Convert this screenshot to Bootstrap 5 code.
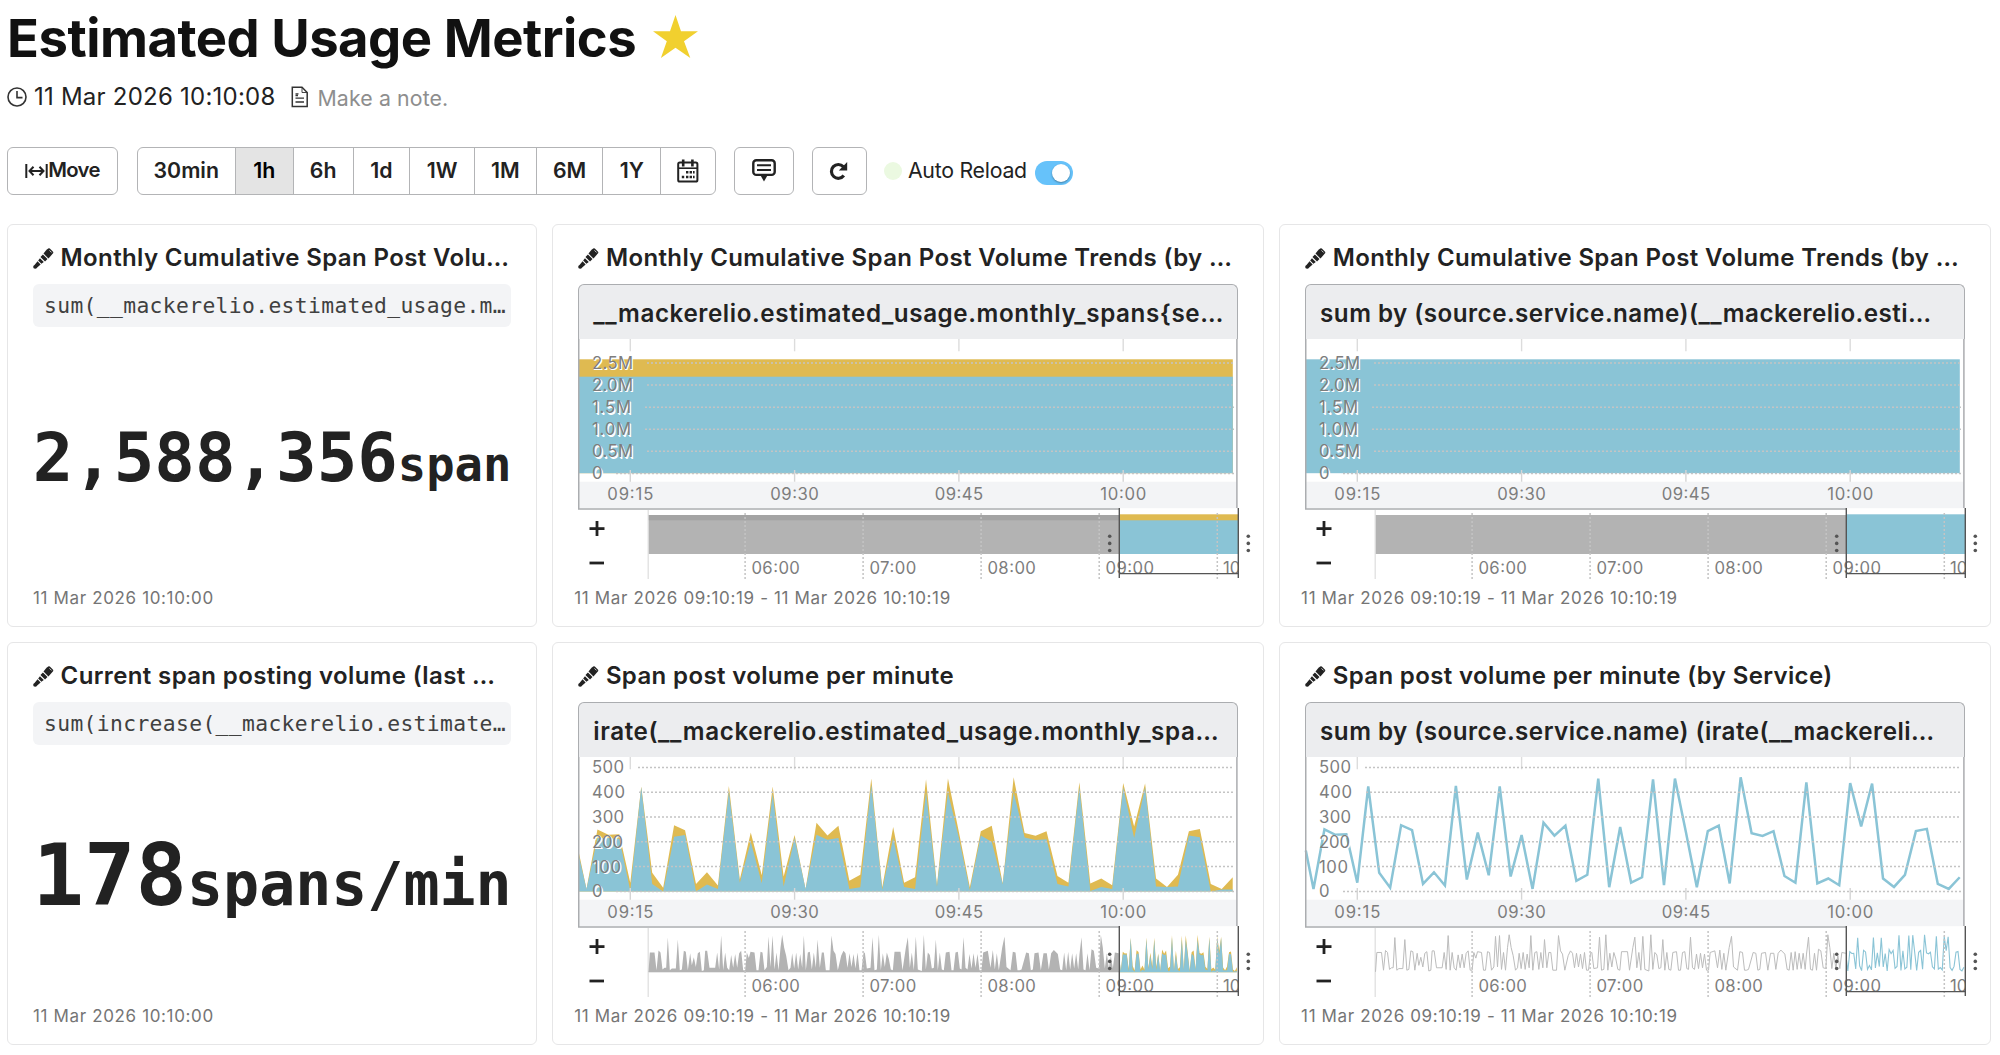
<!DOCTYPE html>
<html lang="en">
<head>
<meta charset="utf-8">
<meta name="viewport" content="width=device-width, initial-scale=1">
<title>Estimated Usage Metrics</title>
<link href="https://cdn.jsdelivr.net/npm/bootstrap@5.3.0/dist/css/bootstrap.min.css" rel="stylesheet">
<style>
body{font-family:Inter,"Liberation Sans",sans-serif;color:#222;background:#fff;overflow:hidden;padding:0 9px 0 7px}
.page-title{font-size:52.6px;font-weight:700;line-height:64px;color:#111;height:75px;padding-top:6px;gap:17px}
.page-title span{letter-spacing:-.5px}
.page-meta{height:44px;gap:0}
.meta-date{font-size:24px;margin-left:7px;letter-spacing:.23px}
.meta-note{font-size:21.3px;color:#8e8e8e;margin-left:8px;padding-top:3px;letter-spacing:.12px}
.tools{height:49px;margin-top:27px}
.tool-btn{--bs-btn-color:#222;--bs-btn-border-color:#b3b4b6;--bs-btn-border-radius:6px;--bs-btn-border-width:1.5px;--bs-btn-active-bg:#e4e4e4;--bs-btn-active-color:#000;--bs-btn-active-border-color:#b3b4b6;font-size:21.3px;font-weight:600;height:48px;padding:0;display:inline-flex;align-items:center;justify-content:center;line-height:1}
.tools .btn-group>.tool-btn{flex:none}
.tool-move{font-size:20.3px;letter-spacing:-.7px}
.auto-label{font-size:21.3px;letter-spacing:-.25px}
.live-dot{width:18px;height:18px;border-radius:50%;background:#ebf9e1}
.toggle{width:38px;height:24px;border-radius:12px;background:#66c2fa;padding:3px}
.toggle i{width:18px;height:18px;border-radius:50%;background:#fff;box-shadow:0 1px 2px rgba(0,0,0,.35)}
.board{display:grid;grid-template-columns:530px 711.5px 711.5px;gap:15px 15.3px;margin-top:29px}
.panel{border:1.5px solid #e6e6e7;border-radius:6px;height:403px;padding:17px 25px 0}
.panel h2{font-size:24px;font-weight:600;line-height:32px;margin:0 0 10px;white-space:nowrap;height:32px;letter-spacing:.37px}
.panel h2 svg{margin-right:6.6px;flex:none;fill:#222}
.query{font:21.33px "DejaVu Sans Mono",monospace;letter-spacing:.36px;background:#f3f4f6;color:#404040;border-radius:6px;height:43px;line-height:43px;padding-left:11px;white-space:nowrap}
.figure-box{height:223px}
.figure-value{font-family:"DejaVu Sans Mono",monospace;font-weight:700;line-height:1;white-space:nowrap;margin-top:38px}
.figure-value small{font-size:.7em;font-weight:700}
.stamp{font-size:17px;line-height:26px;color:#757575;letter-spacing:.64px;white-space:nowrap}
.panel .span-stamp{margin-left:-4px}
.chart-head{border:1.5px solid #abadb0;border-bottom:0;border-radius:6px 6px 0 0;background:#ecedef;height:55px;font-size:24.2px;font-weight:600;line-height:58px;padding-left:14px;white-space:nowrap;letter-spacing:.47px}
.chart-head.wide{letter-spacing:.6px}
.plot{display:block;overflow:visible;width:659px;height:246px}
.plot text{font-size:16.7px;fill:#7d7d7d}
.plot .halo{text-shadow:1.4px 1.4px 0 #fff,.7px .7px 0 #fff}
</style>
<script src="https://cdn.jsdelivr.net/npm/bootstrap@5.3.0/dist/js/bootstrap.bundle.min.js"></script>
</head>
<body>
<svg width="0" height="0" class="position-absolute" aria-hidden="true">
  <symbol id="pencil" viewBox="0 0 22 22"><path d="M14.2 1.8 16 .5Q16.8 0 17.6.6L21 4Q21.6 4.8 21 5.6L16.2 11 11 5.8Z"/><path d="M10.4 6.8 15.2 11.6 12.6 14.2 7.8 9.4ZM7.3 10.7 11.3 14.7 8.8 16.6 5.4 13.2ZM4.8 14 8 17.2 4.4 20.4Q3.6 21.8 2.2 21.8.2 21.6.2 19.8.2 18.6 1.6 17.8Z"/><path d="M17.3 2.5 19.5 4.7" stroke="#fff" stroke-width=".8" fill="none"/></symbol>
</svg>
<header>
  <h1 class="page-title d-flex mb-0"><span>Estimated Usage Metrics</span>
    <svg width="46" height="44" viewBox="0 0 46 44" style="margin-top:9px"><path fill="#f1d02f" d="M22.5 0 28 16.3H45L31 26.3 37.3 43 22.5 32.7 7.9 43 13.8 26.3 0 16.3H17Z"/></svg></h1>
  <div class="page-meta d-flex align-items-center">
    <svg width="20" height="20" viewBox="0 0 20 20" fill="none" stroke="#333" stroke-width="1.6"><circle cx="10" cy="10" r="9"/><path d="M10 4V10.6H15.5"/></svg>
    <span class="meta-date">11 Mar 2026 10:10:08</span>
    <svg class="ms-3" width="18" height="22" viewBox="0 0 18 22" fill="none" stroke="#333" stroke-width="1.5"><path d="M1.3 1.2H11L16.2 6.5V20.6H1.3Z"/><path d="M11 1.5V6.5H16" stroke-width=".9"/><path d="M4.5 7.8H7.5M4.5 9.5H7M4.5 12.2H13M4.5 16H13" stroke-width="1.3"/></svg>
    <span class="meta-note">Make a note.</span>
  </div>
  <div class="tools d-flex align-items-center">
    <button class="btn tool-btn tool-move" style="width:111px"><svg width="23" height="16" viewBox="0 0 23 16" fill="none" stroke="#222" stroke-width="2"><path d="M1.3 1V15M21.7 1V15M4.5 8H18.5M8.5 3.8 4.5 8 8.5 12.2M14.5 3.8 18.5 8 14.5 12.2"/></svg><span>Move</span></button>
    <div class="btn-group" style="margin-left:18.5px">
      <button class="btn tool-btn" style="width:99.5px">30min</button>
      <button class="btn tool-btn active" style="width:58.7px">1h</button>
      <button class="btn tool-btn" style="width:61px">6h</button>
      <button class="btn tool-btn" style="width:57.5px">1d</button>
      <button class="btn tool-btn" style="width:66px">1W</button>
      <button class="btn tool-btn" style="width:62.5px">1M</button>
      <button class="btn tool-btn" style="width:67.7px">6M</button>
      <button class="btn tool-btn" style="width:59px">1Y</button>
      <button class="btn tool-btn" style="width:56px"><svg width="22" height="24" viewBox="0 0 22 24" fill="none" stroke="#222"><rect x="1.2" y="3.6" width="19.2" height="19" rx="1.6" stroke-width="2"/><path d="M1 9.2H20.5" stroke-width="1.6"/><path d="M6.2.5V7.5M15.4.5V7.5" stroke-width="2.6"/><path d="M9 13.2H11.4M12.6 13.2H15M16 13.2H17.6M4.8 18H7.2M9 18H11.4M12.6 18H15M16 18H17.6" stroke-width="2.4"/></svg></button>
    </div>
    <button class="btn tool-btn" style="width:60px;margin-left:18px"><svg width="24" height="23" viewBox="0 0 24 23" fill="none" stroke="#222"><rect x="1.3" y="1.3" width="21.4" height="14.6" rx="3" stroke-width="2.4"/><path d="M5 6.2H19M5 11H19" stroke-width="2"/><path d="M8.3 16H15.7L12 22.5Z" fill="#222" stroke="none"/></svg></button>
    <button class="btn tool-btn" style="width:55px;margin-left:17.5px"><svg width="20" height="20" viewBox="0 0 20 20"><path d="M14.8 14.6A6.9 6.9 0 1 1 14.3 5.6" fill="none" stroke="#222" stroke-width="3.2"/><path d="M18.2 1V9.4H9.8Z" fill="#222"/></svg></button>
    <span class="live-dot" style="margin-left:17px"></span>
    <span class="auto-label text-nowrap" style="margin-left:6px;width:120px">Auto Reload</span>
    <span class="toggle d-flex justify-content-end align-items-center mt-1" style="margin-left:7px"><i></i></span>
  </div>
</header>
<main class="board">
  <section class="panel">
    <h2 class="d-flex align-items-center"><svg width="21" height="21"><use href="#pencil"/></svg>Monthly Cumulative Span Post Volu…</h2>
    <div class="query">sum(__mackerelio.estimated_usage.m…</div>
    <div class="figure-box d-flex align-items-center justify-content-center"><div class="figure-value" style="font-size:67.4px">2,588,356<small>span</small></div></div>
    <div class="stamp" style="padding-top:35px">11 Mar 2026 10:10:00</div>
  </section>
  <section class="panel">
    <h2 class="d-flex align-items-center"><svg width="21" height="21"><use href="#pencil"/></svg>Monthly Cumulative Span Post Volume Trends (by …</h2>
    <div class="chart-head wide">__mackerelio.estimated_usage.monthly_spans{se…</div>
    <svg class="plot" data-kind="volume" data-two="1"></svg>
    <div class="stamp span-stamp">11 Mar 2026 09:10:19 - 11 Mar 2026 10:10:19</div>
  </section>
  <section class="panel">
    <h2 class="d-flex align-items-center"><svg width="21" height="21"><use href="#pencil"/></svg>Monthly Cumulative Span Post Volume Trends (by …</h2>
    <div class="chart-head">sum by (source.service.name)(__mackerelio.esti…</div>
    <svg class="plot" data-kind="volume"></svg>
    <div class="stamp span-stamp">11 Mar 2026 09:10:19 - 11 Mar 2026 10:10:19</div>
  </section>
  <section class="panel">
    <h2 class="d-flex align-items-center"><svg width="21" height="21"><use href="#pencil"/></svg>Current span posting volume (last …</h2>
    <div class="query">sum(increase(__mackerelio.estimate…</div>
    <div class="figure-box d-flex align-items-center justify-content-center"><div class="figure-value" style="font-size:85.6px">178<small>spans/min</small></div></div>
    <div class="stamp" style="padding-top:35px">11 Mar 2026 10:10:00</div>
  </section>
  <section class="panel">
    <h2 class="d-flex align-items-center"><svg width="21" height="21"><use href="#pencil"/></svg>Span post volume per minute</h2>
    <div class="chart-head wide">irate(__mackerelio.estimated_usage.monthly_spa…</div>
    <svg class="plot" data-kind="rate" data-two="1"></svg>
    <div class="stamp span-stamp">11 Mar 2026 09:10:19 - 11 Mar 2026 10:10:19</div>
  </section>
  <section class="panel">
    <h2 class="d-flex align-items-center"><svg width="21" height="21"><use href="#pencil"/></svg>Span post volume per minute (by Service)</h2>
    <div class="chart-head">sum by (source.service.name) (irate(__mackereli…</div>
    <svg class="plot" data-kind="rate"></svg>
    <div class="stamp span-stamp">11 Mar 2026 09:10:19 - 11 Mar 2026 10:10:19</div>
  </section>
</main>
<script>
// Per-minute samples from 09:11 to 10:10: all services, then the main service alone.
const total=[10,250,228,230,35,423,75,15,267,247,30,77,24,425,48,237,65,423,60,227,10,277,225,265,43,67,455,17,260,35,57,452,25,455,240,17,243,265,32,460,235,224,243,62,35,440,32,52,25,437,262,435,52,18,67,243,252,30,10,57];
const main=[10,215,215,212,3,420,30,0,220,227,0,28,10,405,35,200,33,395,20,215,10,228,208,215,10,17,430,7,215,18,10,400,20,400,215,5,225,200,30,400,217,207,210,30,20,420,2,18,10,420,215,420,20,18,20,225,218,0,8,8];
// Earlier history for the overview strip: [position, value] in thirds of a pixel from the strip's origin.
const hist="12,0 16,240 30,240 36,20 42,265 48,240 54,30 60,50 65,50 70,425 76,20 82,40 94,40 100,400 106,20 112,30 118,260 124,250 130,20 137,230 142,80 148,180 154,60 160,230 166,250 172,10 178,20 182,260 188,260 195,50 212,50 218,240 224,30 230,450 236,20 242,240 248,50 254,20 260,210 266,50 272,220 278,50 284,230 290,260 296,20 302,20 307,240 313,170 318,250 330,240 336,20 342,20 348,250 354,240 360,20 367,60 372,440 378,60 384,450 390,30 396,240 402,20 408,300 413,460 419,300 425,200 432,20 438,50 443,230 449,40 455,240 461,30 467,220 473,50 478,450 484,20 490,240 496,250 502,30 508,240 514,50 519,400 526,50 532,240 538,240 544,20 555,20 561,450 567,260 573,220 580,20 590,200 597,260 603,230 609,50 615,230 621,60 627,220 633,40 639,240 645,20 651,20 657,230 661,240 667,40 678,50 684,430 690,20 697,30 703,460 709,20 715,230 721,60 727,240 733,160 739,30 745,20 750,250 768,250 774,20 784,300 790,430 796,50 802,240 808,20 814,440 820,30 832,10 838,460 844,30 850,240 856,210 862,40 868,50 874,400 880,20 886,240 892,30 898,20 904,240 915,250 921,20 927,20 933,240 940,250 946,40 951,30 957,430 963,50 969,30 975,220 981,40 987,230 993,50 999,220 1005,20 1011,20 1016,240 1030,260 1038,50 1045,270 1051,30 1057,230 1063,20 1073,300 1080,440 1086,60 1098,20 1105,250 1113,240 1119,20 1125,20 1131,30 1145,240 1153,230 1159,20 1165,30 1170,230 1182,240 1189,20 1197,230 1207,230 1213,30 1220,230 1228,270 1240,220 1247,30 1253,20 1259,240 1265,20 1271,250 1277,30 1283,230 1289,40 1295,230 1301,30 1305,220 1311,430 1317,30 1323,20 1329,230 1335,20 1341,280 1348,260 1355,50 1363,40 1369,460 1375,300 1381,40 1387,230 1393,40 1399,200 1405,40 1411,240 1423,230"
  .split(" ").map(p=>{const[a,v]=p.split(",").map(Number);return[66.5+a/3,v]});
const BLUE="#8ac4d6",GOLD="#dfba51",GREY="#b3b3b3";
const L=(x1,y1,x2,y2,c,w,d)=>`<line x1="${x1}" y1="${y1}" x2="${x2}" y2="${y2}" stroke="${c}" stroke-width="${w}"${d?` stroke-dasharray="${d}"`:""}/>`;
const R=(x,y,w,h,f)=>`<rect x="${x}" y="${y}" width="${w}" height="${h}" fill="${f}"/>`;
const T=(x,y,w,s,a="start",k="")=>`<text x="${x}" y="${y}" text-anchor="${a}" class="${k}"${w?` textLength="${w}" lengthAdjust="spacing"`:""}>${s}</text>`;
const P=(pts,base,f)=>`<polygon fill="${f}" points="${pts[0][0]},${base} ${pts.map(p=>p.map(n=>n.toFixed(2)).join()).join(" ")} ${pts.at(-1)[0]},${base}"/>`;
const LN=(pts,c,w)=>`<polyline fill="none" stroke="${c}" stroke-width="${w}" points="${pts.map(p=>p.map(n=>n.toFixed(2)).join()).join(" ")}"/>`;
document.querySelectorAll(".plot").forEach(svg=>{
  const rate=svg.dataset.kind==="rate",two=svg.dataset.two;
  let o="";
  const ticks=[52.3,216.6,380.9,545.2],names=["09:15","09:30","09:45","10:00"];
  o+=R(0,142.7,658.5,26.5,"#f3f4f6");
  ticks.forEach(x=>o+=L(x,0,x,12.3,"#dcdcdc",1.4));
  const X=m=>52.3+(m-15)*10.953;
  if(rate){
    const Y=v=>134.4-v*.248;
    const pts=(s,e)=>[[.8,Y(e)],...s.map((v,i)=>[X(11+i),Y(v)])];
    if(two){o+=P(pts(total,158),134.4,GOLD)+P(pts(main,145),134.4,BLUE)}
    else o+=LN(pts(total,165),BLUE,2.5);
  }else{
    o+=R(.8,20.3,654,113.9,two?GOLD:BLUE);
    if(two)o+=R(.8,37.7,654,96.5,BLUE);
  }
  const rows=rate?[["500",10.4,32],["400",35.2,33],["300",60,32],["200",84.8,31],["100",109.6,29],["0",134.4,9.5]]
                 :[["2.5M",24,41],["2.0M",46.1,41],["1.5M",68.2,39],["1.0M",90.3,39],["0.5M",112.3,41],["0",134.4,9.5]];
  rows.forEach(([s,y,w])=>{o+=L(Math.round(14+w+14),y,656,y,"#c4c4c4",1.5,"2 2")});
  ticks.forEach(x=>o+=L(x,131,x,142.7,"#d5d5d5",1.4));
  rows.forEach(([s,y,w])=>{o+=T(14,y+6,w,s,"start","halo")});
  ticks.forEach((x,i)=>o+=T(x,161,i==0||i==3?46:48.5,names[i],"middle"));
  o+=`<path d="M.75 0V170H541.5M658.9 0V169" fill="none" stroke="#abadb0" stroke-width="1.5"/>`;
  // overview strip
  o+=L(70.2,171,70.2,240,"#dddddd",1.2);
  if(rate){
    const Y=v=>214.8-v*.0805,q=hist.map(([x,v])=>[x,Y(v)]).filter(p=>p[0]<=541);
    const S=s=>[[541.5,Y(150)],...s.map((v,i)=>[521.2+(11+i)*1.967,Y(v)])];
    if(two)o+=P(q,214.8,GREY)+R(70.7,214,471,1.3,GREY)+P(S(total),215.2,GOLD)+P(S(main),215.2,BLUE);
    else o+=LN(q,"#bcbcbc",1)+LN(S(total),BLUE,1.1);
  }else{
    o+=R(70.8,176,471,39,GREY)+R(541.5,175.3,118.5,39.7,two?GOLD:BLUE);
    if(two)o+=R(70.8,176,471,5.3,"#a4a4a4")+R(541.5,181.3,118.5,33.7,BLUE);
  }
  [[167.1,"06:00"],[285.1,"07:00"],[403.1,"08:00"],[521.2,"09:00"]].forEach(([x,s])=>{o+=L(x,174,x,240,"#c4c4c4",1.5,"2 2")+T(x+6.3,235.4,s=="07:00"?47:48.5,s)});
  o+=L(639.3,174,639.3,240,"#c4c4c4",1.5,"2 2");
  o+=`<svg x="0" y="215" width="660" height="30">${T(645,20.4,0,"10:00")}</svg>`;
  o+=`<path d="M541.3 169V239M660.3 169V239M541.3 234.6H660.3" fill="none" stroke="#555" stroke-width="1.4"/>`;
  [531.7,670.3].forEach(x=>[197.3,204.4,211.5].forEach(y=>o+=`<circle cx="${x}" cy="${y}" r="1.8" fill="#555"/>`));
  o+=L(11.5,189.6,26.5,189.6,"#222",2.8)+L(19,182,19,197,"#222",2.8)+L(11.5,224,26,224,"#222",2.8);
  svg.innerHTML=o;
});
</script>
</body>
</html>
